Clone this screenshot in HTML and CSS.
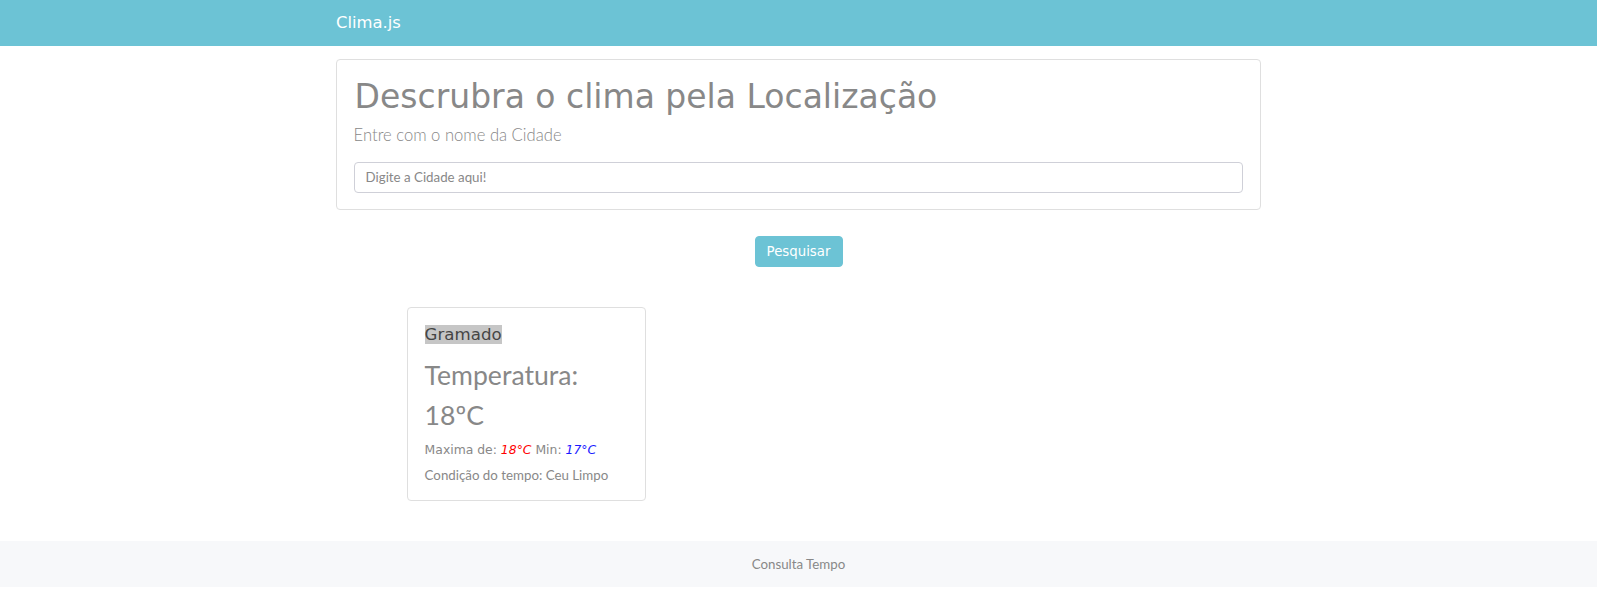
FILE: index.html
```html
<!DOCTYPE html>
<html lang="pt-BR">
<head>
<meta charset="utf-8">
<title>Clima.js</title>
<link rel="stylesheet" href="styles.css">
</head>
<body>
<nav class="navbar">
  <div class="container">
    <span class="brand">Clima.js</span>
  </div>
</nav>
<main class="container">
  <section class="card search-card">
    <h1 class="title">Descrubra o clima pela Localização</h1>
    <p class="lead">Entre com o nome da Cidade</p>
    <input class="field" type="text" placeholder="Digite a Cidade aqui!">
  </section>
  <div class="actions">
    <button class="btn" type="button">Pesquisar</button>
  </div>
  <section class="card result-card">
    <h5 class="city"><span class="mark">Gramado</span></h5>
    <h2 class="temp">Temperatura: 18ºC</h2>
    <p class="range">Maxima de: <em class="max">18°C</em> Min: <em class="min">17°C</em></p>
    <p class="cond">Condição do tempo: Ceu Limpo</p>
  </section>
</main>
<footer class="footer">Consulta Tempo</footer>
</body>
</html>
```
FILE: styles.css
```css
* { box-sizing: border-box; }
body {
  margin: 0;
  font-family: Lato, "Open Sans", sans-serif;
  font-size: 13.3px;
  line-height: 1.5;
  color: #888;
  background: #fff;
}
.container {
  width: 925px;
  margin: 0 auto;
}
.navbar {
  background: #6cc3d5;
  height: 46px;
  display: flex;
  align-items: center;
}
.brand {
  font-family: "DejaVu Sans", sans-serif;
  font-size: 16.4px;
  color: #fff;
  line-height: 20px;
  display: block;
}
.card {
  border: 1px solid #dfdfdf;
  border-radius: 4px;
  background: #fff;
  padding: 16.6px;
}
.search-card {
  margin-top: 13px;
}
.title {
  font-family: "DejaVu Sans", sans-serif;
  font-weight: 400;
  font-size: 33px;
  line-height: 40px;
  margin: 0 0 6.66px;
  color: #888;
  padding-left: 1px;
}
.lead {
  font-weight: 300;
  font-size: 16.64px;
  line-height: 25px;
  margin: 0 0 13.3px;
}
.field {
  display: block;
  width: 100%;
  height: 31px;
  border: 1px solid #cfd0d8;
  border-radius: 4px;
  padding: 0 11px;
  font-family: Lato, sans-serif;
  font-size: 13.3px;
  color: #495057;
  background: #fff;
}
.field::placeholder { color: #888; opacity: 1; }
.actions {
  display: flex;
  justify-content: center;
  margin-top: 26px;
}
.btn {
  font-family: "DejaVu Sans", sans-serif;
  font-size: 13.3px;
  line-height: 20px;
  color: #fff;
  background: #6cc3d5;
  border: 1px solid #6cc3d5;
  border-radius: 4px;
  padding: 4.5px 10px;
  width: 88px;
  height: 31px;
  cursor: pointer;
}
.result-card {
  width: 239px;
  margin: 40px 0 0 71px;
  padding-bottom: 14.6px;
}
.city {
  font-family: "DejaVu Sans", sans-serif;
  font-weight: 400;
  font-size: 16.64px;
  line-height: 20px;
  margin: 0 0 10px;
}
.mark {
  background: #c6c6c6;
  color: #454545;
}
.temp {
  font-family: Lato, sans-serif;
  font-weight: 400;
  font-size: 26.6px;
  line-height: 40px;
  margin: 0 0 6.66px;
  color: #888;
}
.range {
  font-family: "DejaVu Sans", sans-serif;
  font-size: 12.4px;
  line-height: 18.6px;
  margin: 0 0 5px;
}
.max { color: #ff0000; }
.min { color: #1a1aff; }
.cond {
  margin: 0;
  line-height: 20px;
}
.footer {
  margin-top: 40px;
  background: #f7f8fa;
  height: 46px;
  display: flex;
  align-items: center;
  justify-content: center;
  line-height: 20px;
}
```
